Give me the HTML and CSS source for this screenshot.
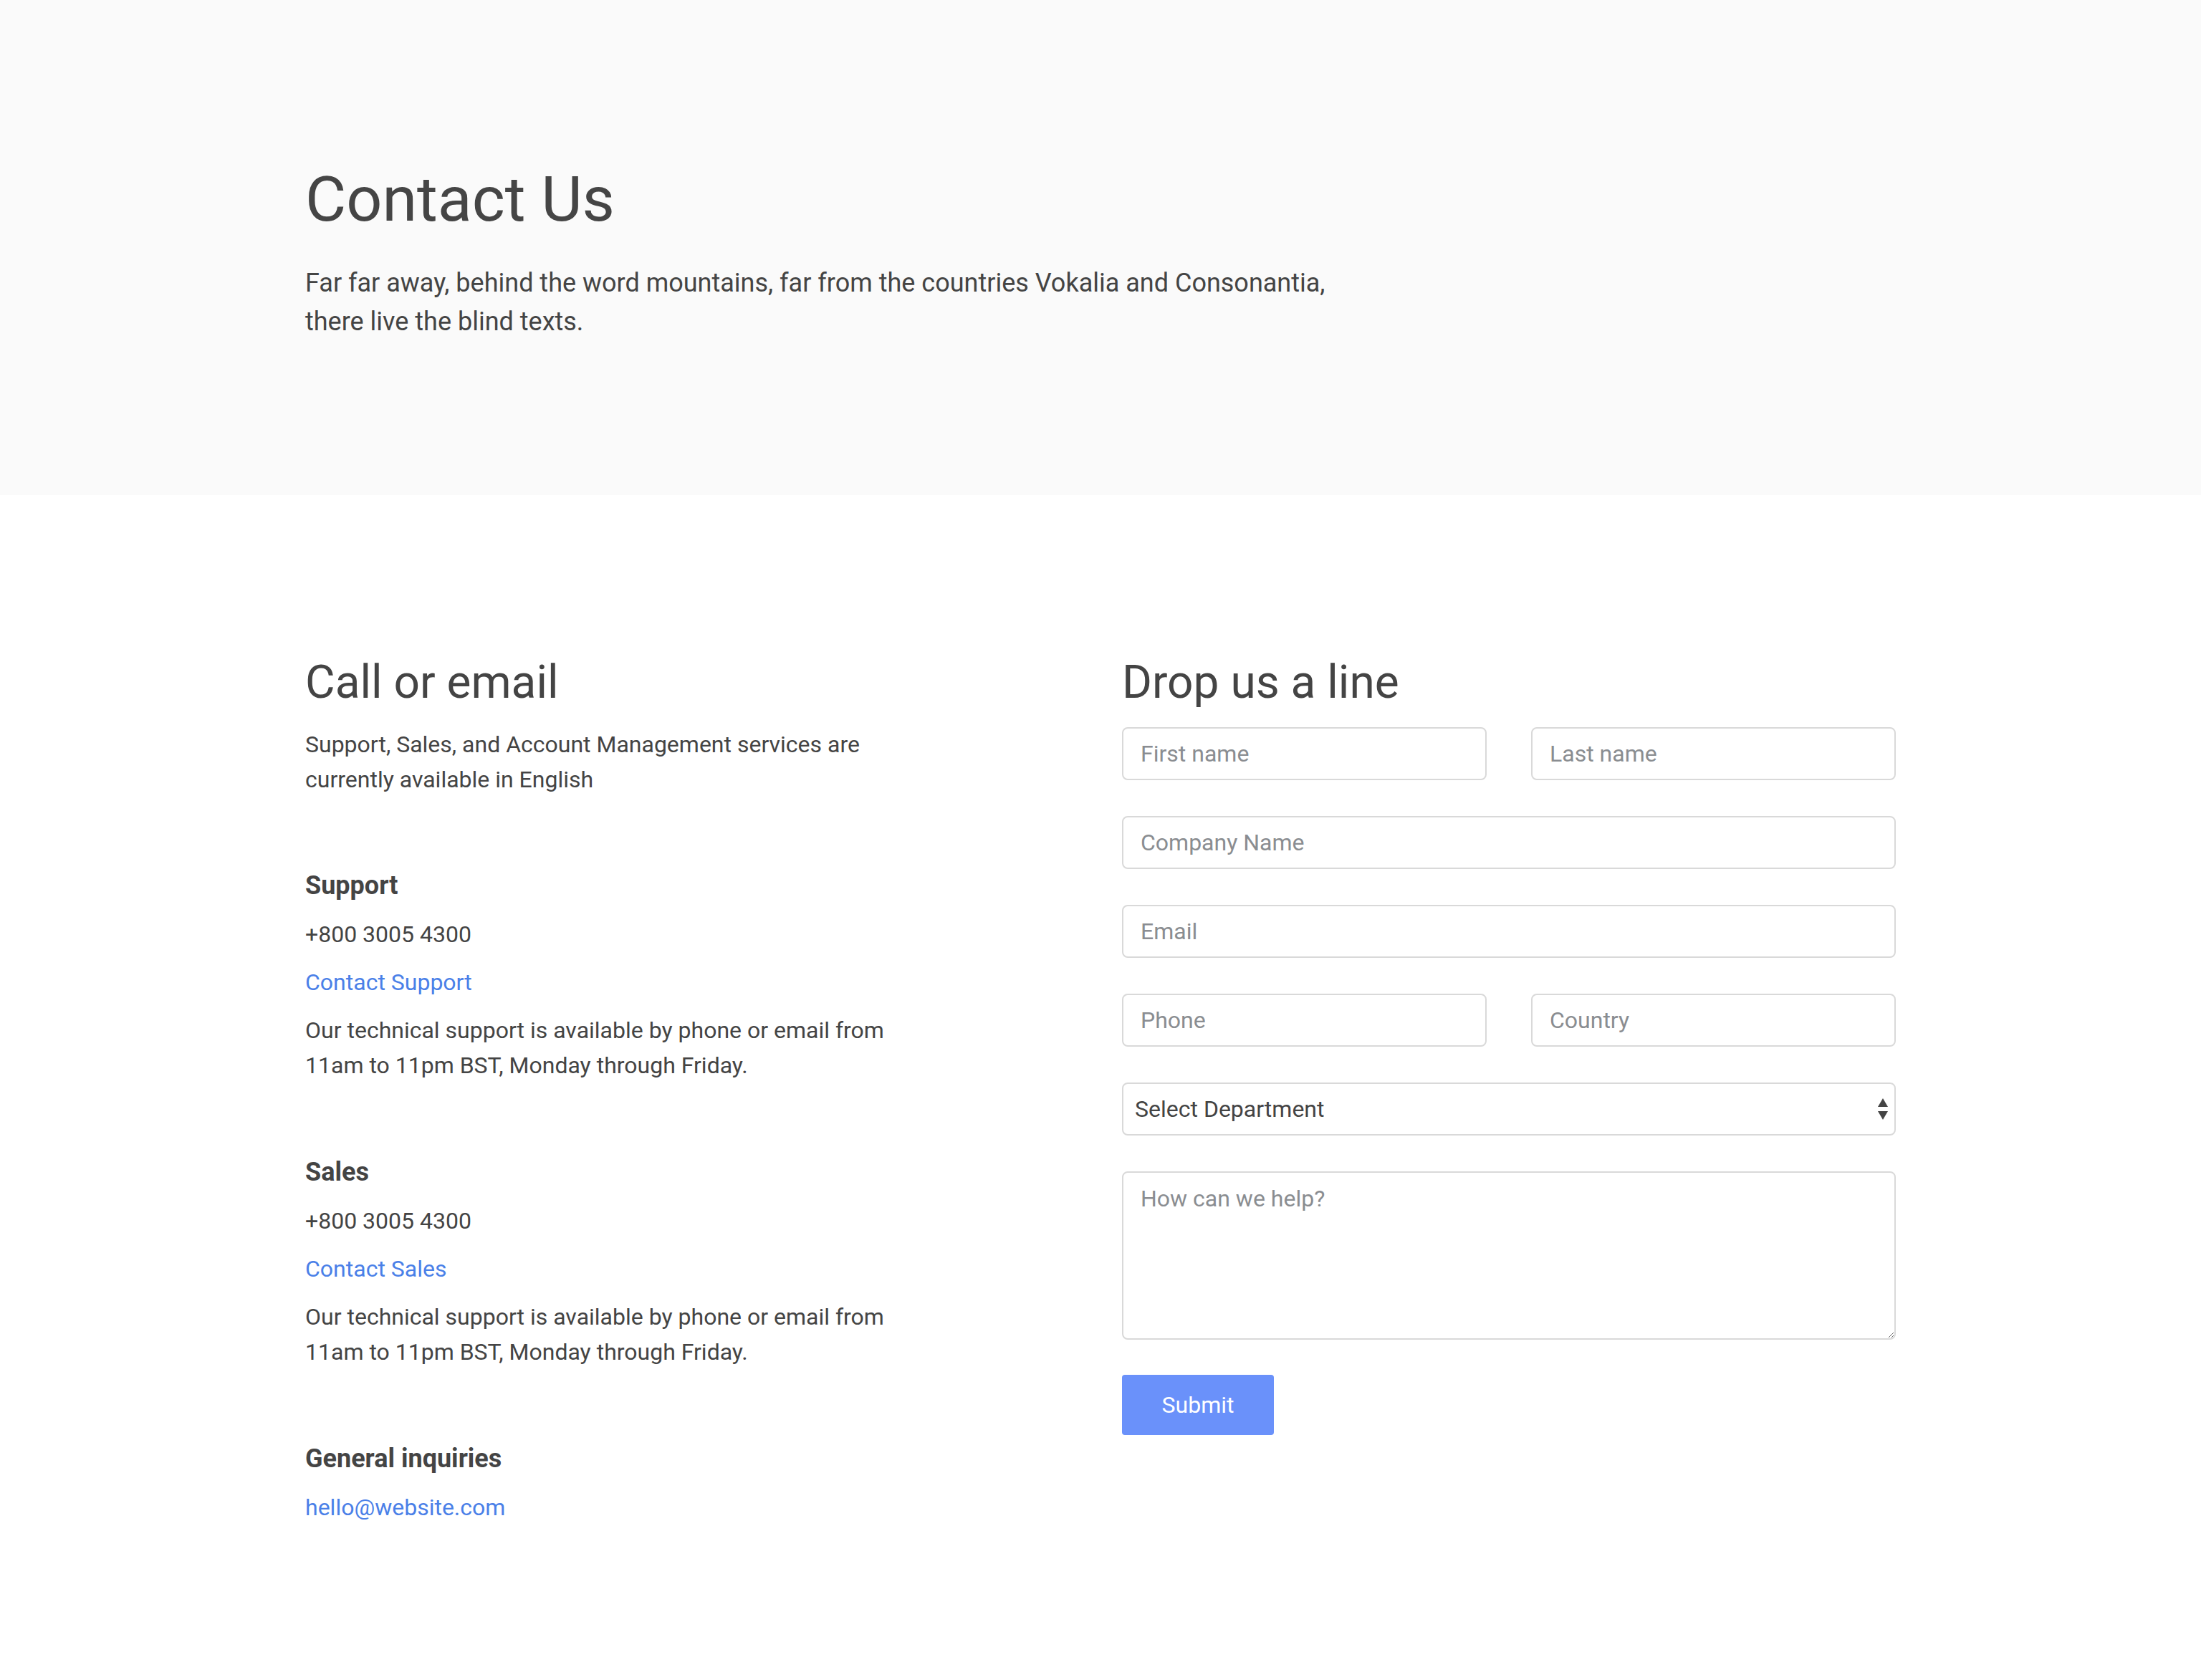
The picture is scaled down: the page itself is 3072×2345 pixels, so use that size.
FILE: index.html
```html
<!DOCTYPE html>
<html lang="en">
<head>
<meta charset="utf-8">
<title>Contact Us</title>
<link rel="stylesheet" href="styles.css">
</head>
<body>
<section class="hero">
  <div class="container">
    <h1 class="hero-title">Contact Us</h1>
    <p class="hero-text">Far far away, behind the word mountains, far from the countries Vokalia and Consonantia, there live the blind texts.</p>
  </div>
</section>
<section class="contact">
  <div class="container contact-grid">
    <div class="info">
      <h2 class="section-title">Call or email</h2>
      <p class="intro">Support, Sales, and Account Management services are currently available in English</p>
      <div class="groups">
        <div class="group">
          <h4 class="group-title">Support</h4>
          <p>+800 3005 4300</p>
          <p><a href="#" class="link">Contact Support</a></p>
          <p class="last">Our technical support is available by phone or email from 11am to 11pm BST, Monday through Friday.</p>
        </div>
        <div class="group">
          <h4 class="group-title">Sales</h4>
          <p>+800 3005 4300</p>
          <p><a href="#" class="link">Contact Sales</a></p>
          <p class="last">Our technical support is available by phone or email from 11am to 11pm BST, Monday through Friday.</p>
        </div>
        <div class="group">
          <h4 class="group-title">General inquiries</h4>
          <p class="last"><a href="#" class="link">hello@website.com</a></p>
        </div>
      </div>
    </div>
    <form class="form">
      <h2 class="section-title">Drop us a line</h2>
      <div class="fields">
        <div class="row-2">
          <input class="field" type="text" placeholder="First name">
          <input class="field" type="text" placeholder="Last name">
        </div>
        <input class="field" type="text" placeholder="Company Name">
        <input class="field" type="email" placeholder="Email">
        <div class="row-2">
          <input class="field" type="text" placeholder="Phone">
          <input class="field" type="text" placeholder="Country">
        </div>
        <div class="select-wrap">
          <select class="field select">
            <option>Select Department</option>
            <option>Support</option>
            <option>Sales</option>
          </select>
          <svg class="select-arrows" width="14" height="30" viewBox="0 0 14 30"><path d="M7 0 L14 12 L0 12 Z" fill="#444"/><path d="M0 18 L14 18 L7 30 Z" fill="#444"/></svg>
        </div>
        <textarea class="field textarea" placeholder="How can we help?"></textarea>
      </div>
      <button type="button" class="submit">Submit</button>
    </form>
  </div>
</section>
</body>
</html>
```
FILE: styles.css
```css
* { box-sizing: border-box; }
html, body { margin: 0; padding: 0; background: #fff; }
body {
  font-family: Roboto, "Liberation Sans", Arial, sans-serif;
  color: #444;
}
.container {
  width: 2220px;
  margin: 0 auto;
}
.hero {
  background: #fafafa;
  padding: 225px 0 215px;
}
.hero-title {
  font-size: 88px;
  font-weight: 400;
  line-height: 106px;
  margin: 0 0 37px;
  color: #454545;
}
.hero-text {
  font-size: 36px;
  line-height: 54px;
  margin: 0;
  max-width: 1460px;
  color: #444;
}
.contact {
  padding: 218px 0 216px;
}
.contact-grid {
  display: grid;
  grid-template-columns: 870px 1080px;
  column-gap: 270px;
  align-items: start;
}
.section-title {
  font-size: 64px;
  font-weight: 400;
  line-height: 88px;
  margin: 0 0 18px;
  color: #444;
}
.intro {
  font-size: 32px;
  line-height: 49px;
  margin: 0;
}
.groups {
  display: flex;
  flex-direction: column;
  gap: 103px;
  margin-top: 102px;
}
.group {
  display: flex;
  flex-direction: column;
}
.group-title {
  font-size: 36px;
  font-weight: 700;
  line-height: 43px;
  margin: 0 0 22px;
  color: #444;
}
.group p {
  font-size: 32px;
  line-height: 49px;
  margin: 0 0 18px;
}
.group p.last { margin-bottom: 0; }
.link {
  color: #4a80e8;
  text-decoration: none;
}
.form {
  display: flex;
  flex-direction: column;
  margin: 0;
}
.fields {
  display: flex;
  flex-direction: column;
  gap: 50px;
}
.row-2 {
  display: grid;
  grid-template-columns: 1fr 1fr;
  column-gap: 62px;
}
.field {
  display: block;
  width: 100%;
  height: 74px;
  border: 2px solid #d9d9d9;
  border-radius: 8px;
  background: #fff;
  padding: 0 24px;
  font-family: Roboto, "Liberation Sans", Arial, sans-serif;
  font-size: 32px;
  color: #444;
  outline: none;
}
.field::placeholder { color: #8a8d91; opacity: 1; }
.select-wrap { position: relative; }
.select {
  appearance: none;
  -webkit-appearance: none;
  padding: 0 60px 0 16px;
  color: #444;
}
.select-arrows {
  position: absolute;
  right: 11px;
  top: 22px;
  pointer-events: none;
}
.textarea {
  height: 235px;
  padding: 12px 24px;
  line-height: 48px;
  resize: vertical;
}
.submit {
  margin-top: 49px;
  align-self: flex-start;
  width: 212px;
  height: 84px;
  border: none;
  border-radius: 4px;
  background: #6a91fa;
  color: #fff;
  font-family: Roboto, "Liberation Sans", Arial, sans-serif;
  font-size: 32px;
  cursor: pointer;
}
```
